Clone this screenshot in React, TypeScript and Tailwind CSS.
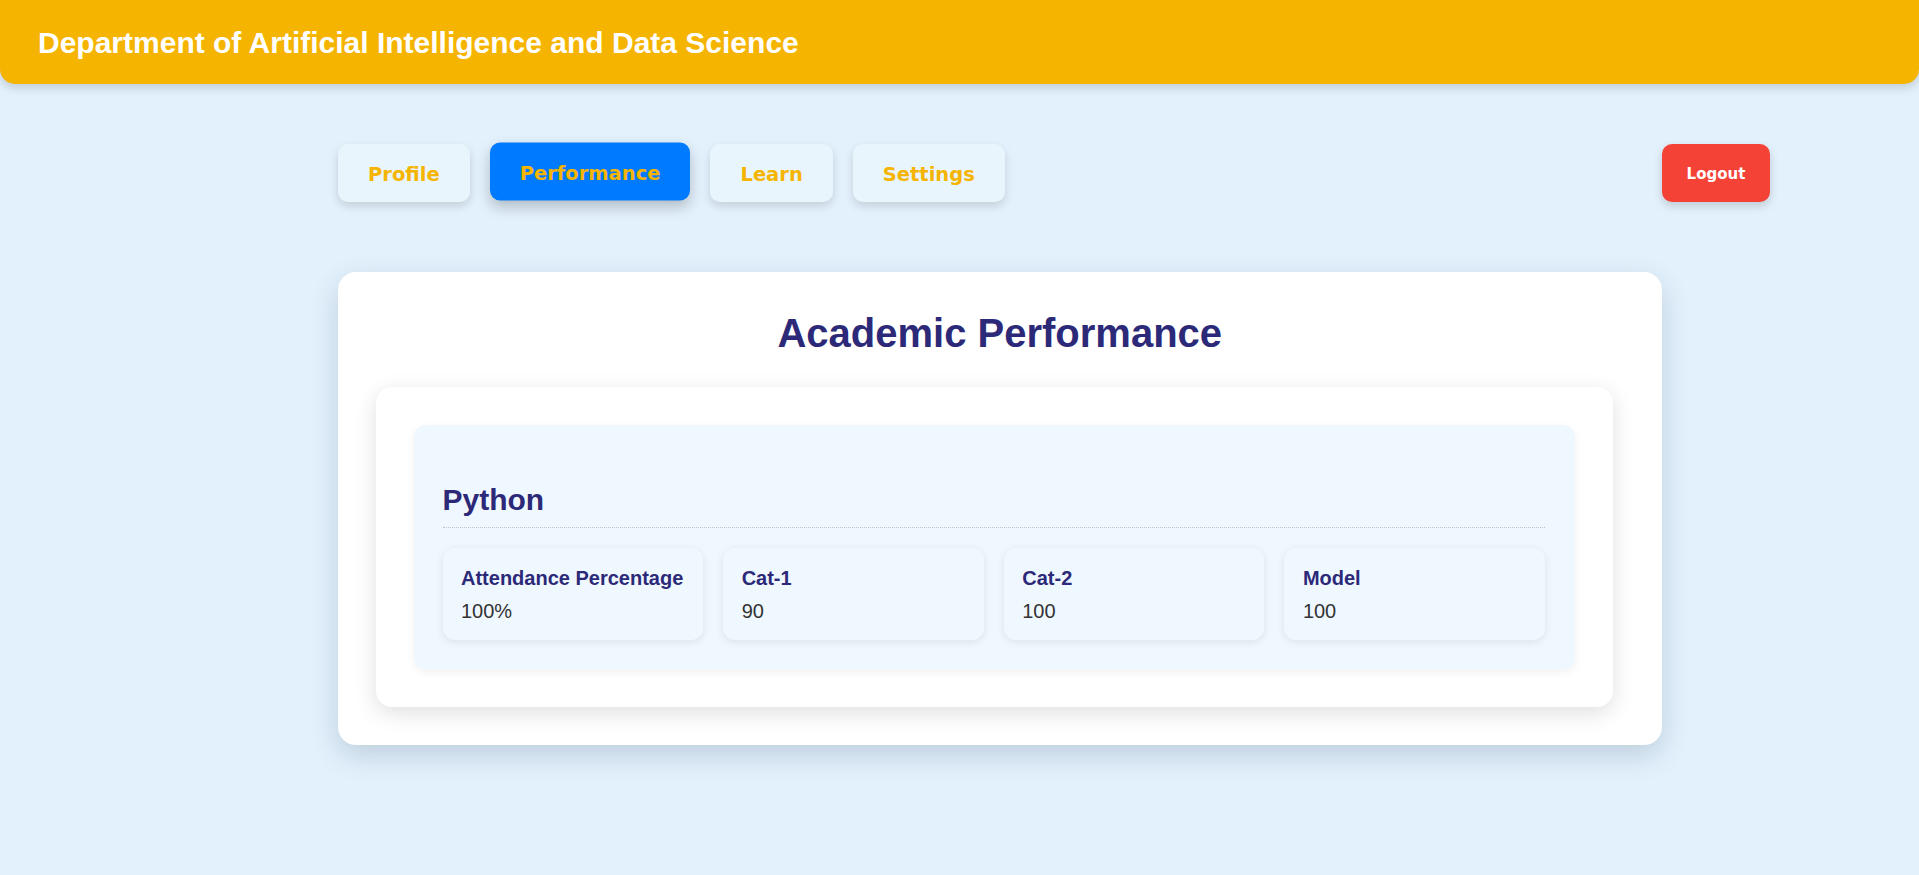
import React, { useState } from 'react';

const tabs = ["Profile", "Performance", "Learn", "Settings"];

const marks = [
  { label: "Attendance Percentage", value: "100%" },
  { label: "Cat-1", value: "90" },
  { label: "Cat-2", value: "100" },
  { label: "Model", value: "100" },
];

export default function App() {
  const [active, setActive] = useState("Performance");

  return (
    <div className="min-h-screen bg-[#e3f1fc] font-['Liberation_Sans',Arial,sans-serif] pb-[60px]">
      {/* Top bar */}
      <header className="bg-[#f5b400] rounded-b-[15px] px-[38px] pt-[26px] pb-[24px] shadow-[0_4px_10px_rgba(0,0,0,0.15)]">
        <h1 className="text-white font-bold text-[30px] leading-[34px]">
          Department of Artificial Intelligence and Data Science
        </h1>
      </header>

      {/* Navigation */}
      <nav className="mt-[60px] pl-[338px] pr-[149px] flex justify-between items-start">
        <div className="flex gap-[20px]">
          {tabs.map((t) => (
            <button
              key={t}
              onClick={() => setActive(t)}
              className={
                t === active
                  ? "h-[58px] px-[30px] pt-[3px] rounded-[10px] bg-[#007bff] text-[#f5b400] font-bold text-[19.5px] font-['DejaVu_Sans',Verdana,sans-serif] -translate-y-[1.5px] shadow-[0_6px_14px_rgba(0,0,0,0.22)]"
                  : "h-[58px] px-[30px] pt-[3px] rounded-[10px] bg-[#e9f5fd] text-[#f5b400] font-bold text-[19.5px] font-['DejaVu_Sans',Verdana,sans-serif] shadow-[0_4px_10px_rgba(0,0,0,0.14)]"
              }
            >
              {t}
            </button>
          ))}
        </div>
        <button className="h-[58px] w-[108px] pt-[3px] rounded-[10px] bg-[#f44336] text-white font-bold text-[15px] font-['DejaVu_Sans',Verdana,sans-serif] shadow-[0_4px_10px_rgba(0,0,0,0.16)]">
          Logout
        </button>
      </nav>

      {/* Performance card */}
      <main className="mt-[70px] ml-[338px] w-[1324px] bg-white rounded-[18px] pl-[37.5px] pr-[49px] py-[37.5px] shadow-[0_10px_28px_rgba(40,70,100,0.2)]">
        <h2 className="text-center pl-[11px] text-[#2c2a78] font-bold text-[40px] leading-[46px] mb-[31.5px]">
          Academic Performance
        </h2>

        <div className="bg-white rounded-[16px] p-[38px] shadow-[0_6px_22px_rgba(0,0,0,0.13)]">
          <div className="bg-[#f0f8ff] rounded-[12px] p-[29px] pr-[30px] shadow-[0_3px_10px_rgba(0,0,0,0.06)]">
            <h3 className="mt-[29px] pb-[10px] border-b border-dotted border-[#bcc3ca] text-[#2c2a78] font-bold text-[30px] leading-[34px]">
              Python
            </h3>
            <div className="mt-[20px] grid grid-cols-4 gap-[20px]">
              {marks.map((m) => (
                <div
                  key={m.label}
                  className="bg-[#f0f8ff] rounded-[12px] px-[18.5px] pt-[18.5px] pb-[17px] shadow-[0_2px_8px_rgba(0,0,0,0.09)]"
                >
                  <div className="text-[#2c2a78] font-bold text-[20px] leading-[23px] mb-[10.5px]">{m.label}</div>
                  <div className="text-[#333333] text-[20px] leading-[23px]">{m.value}</div>
                </div>
              ))}
            </div>
          </div>
        </div>
      </main>
    </div>
  );
}
